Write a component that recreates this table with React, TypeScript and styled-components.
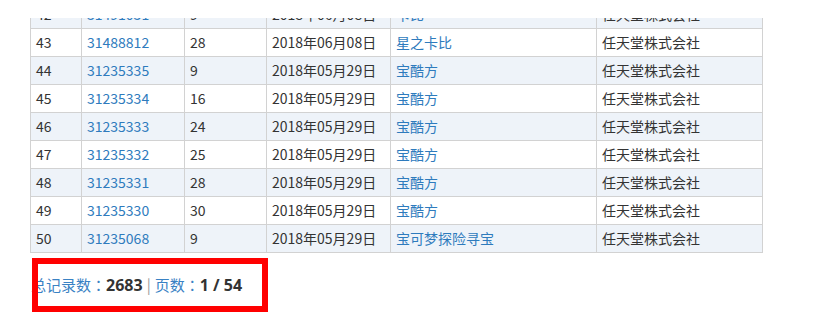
import React from "react";
import styled, { createGlobalStyle } from "styled-components";

interface Row {
  no: number;
  reg: string;
  cls: string;
  date: string;
  name: string;
  owner: string;
}

const rows: Row[] = [
  { no: 42, reg: "31491031", cls: "9", date: "2018年06月08日", name: "卡比", owner: "任天堂株式会社" },
  { no: 43, reg: "31488812", cls: "28", date: "2018年06月08日", name: "星之卡比", owner: "任天堂株式会社" },
  { no: 44, reg: "31235335", cls: "9", date: "2018年05月29日", name: "宝酷方", owner: "任天堂株式会社" },
  { no: 45, reg: "31235334", cls: "16", date: "2018年05月29日", name: "宝酷方", owner: "任天堂株式会社" },
  { no: 46, reg: "31235333", cls: "24", date: "2018年05月29日", name: "宝酷方", owner: "任天堂株式会社" },
  { no: 47, reg: "31235332", cls: "25", date: "2018年05月29日", name: "宝酷方", owner: "任天堂株式会社" },
  { no: 48, reg: "31235331", cls: "28", date: "2018年05月29日", name: "宝酷方", owner: "任天堂株式会社" },
  { no: 49, reg: "31235330", cls: "30", date: "2018年05月29日", name: "宝酷方", owner: "任天堂株式会社" },
  { no: 50, reg: "31235068", cls: "9", date: "2018年05月29日", name: "宝可梦探险寻宝", owner: "任天堂株式会社" }
];

const widths = [51, 103, 82, 124, 206, 166];

const GlobalStyle = createGlobalStyle`
  html, body {
    margin: 0;
    padding: 0;
    background: #fff;
  }
  body {
    font-family: "Microsoft YaHei", "Noto Sans CJK SC", sans-serif;
    font-size: 14px;
    color: #333;
  }
`;

const Page = styled.div`
  width: 827px;
  height: 334px;
  padding: 18px 0 0 30px;
  box-sizing: border-box;
  overflow: hidden;
`;

// the list is scrolled, so row 42 only shows its lower part
const Viewport = styled.div`
  width: 733px;
  height: 235px;
  overflow: hidden;
`;

const Table = styled.table`
  border-collapse: collapse;
  table-layout: fixed;
  width: 733px;
  margin-top: -18px;
`;

const Tr = styled.tr<{ $striped: boolean }>`
  height: 28px;
  background: ${({ $striped }) => ($striped ? "#eef3f9" : "#fff")};
`;

const Td = styled.td`
  border: 1px solid #d2d2d2;
  padding: 0 0 0 5px;
  height: 27px;
  line-height: 27px;
  white-space: nowrap;
  overflow: hidden;
  color: #333;
`;

const Link = styled.a`
  color: #2e7bbd;
  text-decoration: none;
`;

const Footer = styled.div`
  position: relative;
  height: 60px;
  width: 733px;
`;

const Pager = styled.div`
  padding-top: 22px;
  margin-left: 1px;
  font-size: 15px;
  line-height: 20px;
  white-space: nowrap;
`;

const Label = styled.span`
  color: #3a82c4;
`;

const Colon = styled.span`
  font-family: "Noto Sans CJK JP", "Noto Sans CJK SC", sans-serif;
`;

const Value = styled.b`
  color: #333;
  font-size: 16px;
  font-weight: bold;
  font-family: "Open Sans", "Noto Sans CJK SC", sans-serif;
`;

const Sep = styled.span`
  color: #999;
  margin: 0 4px;
`;

/* red annotation frame drawn over the pager */
const Highlight = styled.div`
  position: absolute;
  left: 2px;
  top: 5px;
  width: 236px;
  height: 54px;
  border: 6px solid #f00;
  box-sizing: border-box;
  pointer-events: none;
`;

export default function App() {
  return (
    <Page>
      <GlobalStyle />
      <Viewport>
        <Table>
          <colgroup>
            {widths.map((w, i) => (
              <col key={i} style={{ width: w }} />
            ))}
          </colgroup>
          <tbody>
            {rows.map((r) => (
              <Tr key={r.no} $striped={r.no % 2 === 0}>
                <Td>{r.no}</Td>
                <Td>
                  <Link href="#">{r.reg}</Link>
                </Td>
                <Td>{r.cls}</Td>
                <Td>{r.date}</Td>
                <Td>
                  <Link href="#">{r.name}</Link>
                </Td>
                <Td>{r.owner}</Td>
              </Tr>
            ))}
          </tbody>
        </Table>
      </Viewport>
      <Footer>
        <Pager>
          <Label>
            总记录数<Colon>：</Colon>
          </Label>
          <Value>2683</Value>
          <Sep>|</Sep>
          <Label>
            页数<Colon>：</Colon>
          </Label>
          <Value>1 / 54</Value>
        </Pager>
        <Highlight />
      </Footer>
    </Page>
  );
}
